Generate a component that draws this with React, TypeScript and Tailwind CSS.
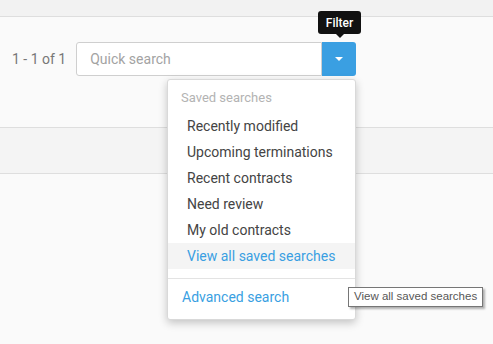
import React from 'react';

const SAVED = [
  'Recently modified',
  'Upcoming terminations',
  'Recent contracts',
  'Need review',
  'My old contracts',
];

export default function App() {
  return (
    <div className="relative w-[493px] h-[344px] overflow-hidden bg-[#fafafa] font-['Roboto',sans-serif] text-[14px]">
      {/* top strip */}
      <div className="h-[17px] bg-[#f2f2f2] border-b border-[#dedede]" />

      {/* toolbar */}
      <div className="mt-[25px] flex items-center h-[34px] pl-[12px]">
        <span className="text-[#777] text-[14px]">1 - 1 of 1</span>
        <div className="ml-[10px] flex h-[34px]">
          <div className="w-[246px] h-full flex items-center pl-[13px] bg-white border border-[#cfcfcf] rounded-l-[3px] text-[#a3a3a3]">
            Quick search
          </div>
          <button className="w-[34px] h-full flex items-center justify-center bg-[#3a9fe2] rounded-r-[3px]">
            <span className="block w-0 h-0 border-l-[4px] border-r-[4px] border-t-[4px] border-l-transparent border-r-transparent border-t-white" />
          </button>
        </div>
      </div>

      {/* list header band */}
      <div className="mt-[51px] h-[47px] bg-[#f4f4f4] border-y border-[#dedede]" />

      {/* Filter tooltip */}
      <div className="absolute left-[318px] top-[11px] flex flex-col items-center">
        <div className="w-[43px] h-[23px] flex items-center justify-center rounded-[3px] bg-[#111] text-white text-[12px] font-medium">
          Filter
        </div>
        <span className="block w-0 h-0 border-l-[4px] border-r-[4px] border-t-[4px] border-l-transparent border-r-transparent border-t-[#111]" />
      </div>

      {/* dropdown */}
      <div className="absolute left-[167px] top-[79px] w-[189px] h-[241px] bg-white border border-[#d9d9d9] rounded-[3px] shadow-[0_3px_8px_rgba(0,0,0,0.22)]">
        <div className="pt-[8px] pl-[13px] h-[33px] leading-[20px] text-[13px] text-[#b3b3b3]">Saved searches</div>
        <ul>
          {SAVED.map(s => (
            <li key={s} className="h-[26px] leading-[26px] pl-[19px] text-[#444]">{s}</li>
          ))}
          <li className="h-[26px] leading-[26px] pl-[19px] text-[#3a9fe2] bg-[#f4f4f4]">View all saved searches</li>
        </ul>
        <div className="mt-[9px] border-t border-[#e3e3e3]" />
        <div className="h-[37px] leading-[37px] pl-[14px] text-[#3a9fe2]">Advanced search</div>
      </div>

      {/* native title tooltip */}
      <div className="absolute left-[348px] top-[287px] w-[135px] h-[20px] flex items-center pl-[5px] bg-white border border-[#767676] shadow-[2px_2px_2px_rgba(0,0,0,0.3)] font-['Liberation_Sans',sans-serif] text-[11.5px] text-[#575757]">
        View all saved searches
      </div>
    </div>
  );
}
